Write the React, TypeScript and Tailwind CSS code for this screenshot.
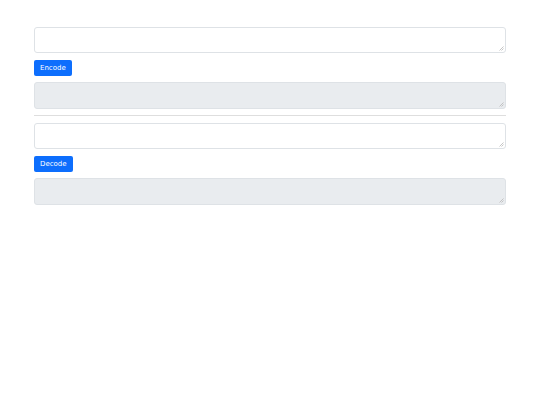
import React from "react";

function Grip() {
  return (
    <svg className="pointer-events-none absolute bottom-[2px] right-[2px]" width="5" height="5" viewBox="0 0 5 5">
      <line x1="0.5" y1="4.5" x2="4.5" y2="0.5" stroke="#b8b8b8" strokeWidth="0.8" />
      <line x1="2.5" y1="4.5" x2="4.5" y2="2.5" stroke="#b8b8b8" strokeWidth="0.8" />
    </svg>
  );
}

function Area({ gray, className = "" }: { gray?: boolean; className?: string }) {
  return (
    <div className={"relative " + className}>
      <textarea
        readOnly={gray}
        className={
          "block w-full rounded-[3px] border border-[#dee2e6] outline-none resize-none " +
          (gray ? "h-[27px] bg-[#e9ecef]" : "h-[26px] bg-white")
        }
      />
      <Grip />
    </div>
  );
}

export default function App() {
  const btn = "h-[16px] rounded-[2px] bg-[#0d6efd] px-[6px] text-[7px] leading-none text-white";
  return (
    <div className="min-h-[405px] w-[540px] bg-white" style={{ fontFamily: '"DejaVu Sans", sans-serif' }}>
      <div className="flex flex-col px-[34px] pt-[27px]">
        <Area />
        <div className="mt-[7px] flex">
          <button className={btn}>Encode</button>
        </div>
        <Area gray className="mt-[6px]" />
        <hr className="mt-[6px] border-t border-[#dedede]" />
        <Area className="mt-[7px]" />
        <div className="mt-[7px] flex">
          <button className={btn}>Decode</button>
        </div>
        <Area gray className="mt-[6px]" />
      </div>
    </div>
  );
}
